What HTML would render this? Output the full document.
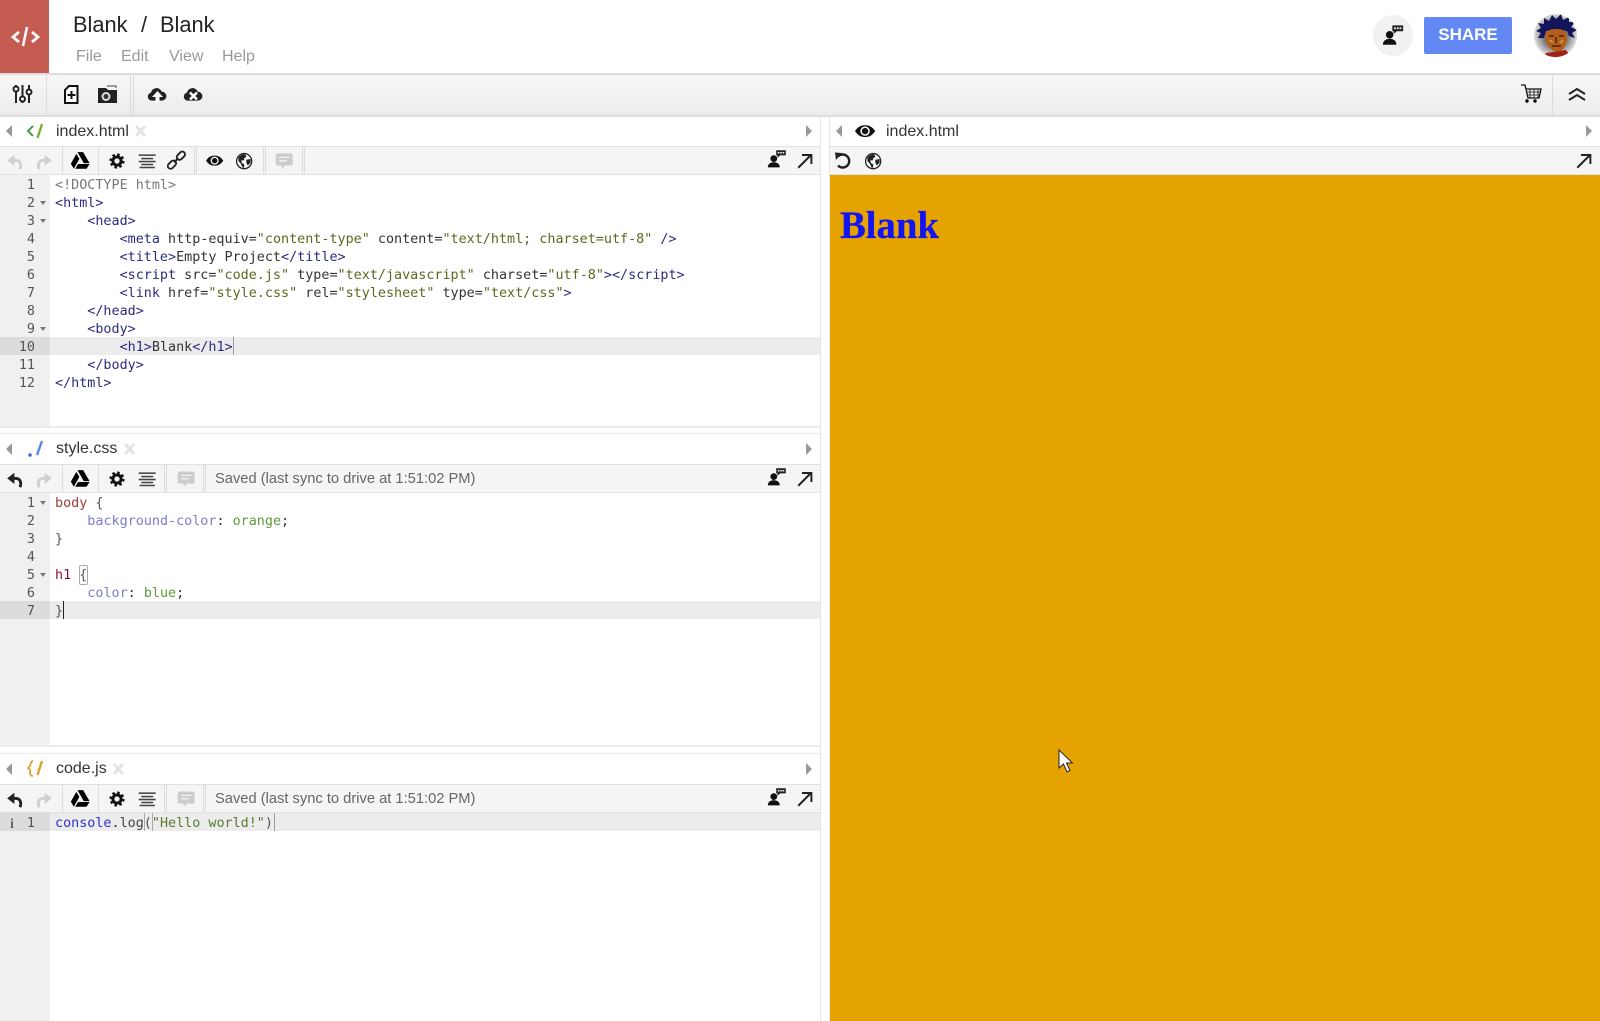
<!DOCTYPE html>
<html><head><meta charset="utf-8"><title>Blank / Blank</title>
<style>
html,body{margin:0;padding:0;width:1600px;height:1021px;overflow:hidden;background:#fff;font-family:"Liberation Sans",sans-serif}
div,span.a{position:absolute}
.bar{left:0;background:#f5f5f5;border-top:1px solid #e0e0e0;border-bottom:1px solid #e2e2e2;box-sizing:border-box}
.sep{width:1px;background:#dcdcdc}
.tab{font-size:16px;color:#333;line-height:20px;white-space:pre}
.gut{left:0;width:50px;background:#f0f0f0}
.hl{left:50px;width:770px;height:18px;background:#ececec}
.hg{left:0;width:50px;height:18px;background:#dcdcdc}
.ln{font:13.42px/18px "DejaVu Sans Mono",monospace;color:#555;width:35px;left:0;text-align:right;height:18px;margin-top:2px}
.c{font:13.42px/18px "DejaVu Sans Mono",monospace;color:#333;left:55px;white-space:pre;height:18px;margin-top:2px}
.t{color:#2c2c80}.d{color:#777}.s{color:#5a6a20}.at{color:#333}
.sel{color:#a03c3c}.h{color:#900c3f}.p{color:#7c7cd0}.v{color:#609a3c}.b{color:#555}
.saved{font-size:14.7px;color:#666;line-height:20px;white-space:pre}
.menu{font-size:16px;color:#999;line-height:20px;top:46px}
svg{position:absolute;left:0;top:0}
</style></head><body>

<div style="left:0;top:0;width:49px;height:73px;background:#c45c52"></div>
<div style="left:73px;top:11px;font-size:21.8px;line-height:28px;color:#222;white-space:pre">Blank</div>
<div style="left:141px;top:11px;font-size:21.8px;line-height:28px;color:#222">/</div>
<div style="left:160px;top:11px;font-size:21.8px;line-height:28px;color:#222">Blank</div>
<div class="menu" style="left:76px;top:47px">File</div>
<div class="menu" style="left:121px;top:47px">Edit</div>
<div class="menu" style="left:169px;top:47px">View</div>
<div class="menu" style="left:222px;top:47px">Help</div>
<div style="left:1373px;top:15px;width:40px;height:41px;border-radius:50%;background:#f1f1f1"></div>
<div style="left:1424px;top:17px;width:88px;height:37px;border-radius:2px;background:#6388f3;color:#fff;font-weight:bold;font-size:17px;line-height:36px;text-align:center">SHARE</div>

<div class="bar" style="top:73px;width:1600px;height:44px;border-top:2px solid #dcdcdc;border-bottom:2px solid #dcdcdc;background:linear-gradient(#f7f7f7,#ececec)"></div>
<div class="sep" style="left:46px;top:75px;height:41px"></div>
<div class="sep" style="left:130px;top:75px;height:41px"></div>
<div class="sep" style="left:133px;top:75px;height:41px"></div>
<div class="sep" style="left:1552px;top:75px;height:41px"></div>

<!-- panel 1 -->
<div class="bar" style="top:146px;width:820px;height:29px"></div>
<div class="sep" style="left:62px;top:147px;height:27px"></div>
<div class="sep" style="left:98px;top:147px;height:27px"></div>
<div class="sep" style="left:194px;top:147px;height:27px"></div>
<div class="sep" style="left:196px;top:147px;height:27px"></div>
<div class="sep" style="left:263px;top:147px;height:27px"></div>
<div class="sep" style="left:265px;top:147px;height:27px"></div>
<div class="sep" style="left:302px;top:147px;height:27px"></div>
<div class="sep" style="left:304px;top:147px;height:27px"></div>
<div class="tab" style="left:56px;top:122px">index.html</div>
<div class="gut" style="top:175px;height:251px"></div>
<div class="hl" style="top:337px"></div><div class="hg" style="top:337px"></div>
<div style="left:0;top:426px;width:820px;height:2px;background:#ececec"></div>
<div style="left:0;top:433px;width:820px;height:1px;background:#e8e8e8"></div>

<div class="ln" style="top:175px">1</div><div class="c d" style="top:175px">&lt;!DOCTYPE html&gt;</div>
<div class="ln" style="top:193px">2</div><div class="c t" style="top:193px">&lt;html&gt;</div>
<div class="ln" style="top:211px">3</div><div class="c t" style="top:211px">    &lt;head&gt;</div>
<div class="ln" style="top:229px">4</div><div class="c" style="top:229px">        <span class="t">&lt;meta</span> http-equiv=<span class="s">"content-type"</span> content=<span class="s">"text/html; charset=utf-8"</span> <span class="t">/&gt;</span></div>
<div class="ln" style="top:247px">5</div><div class="c" style="top:247px">        <span class="t">&lt;title&gt;</span>Empty Project<span class="t">&lt;/title&gt;</span></div>
<div class="ln" style="top:265px">6</div><div class="c" style="top:265px">        <span class="t">&lt;script</span> src=<span class="s">"code.js"</span> type=<span class="s">"text/javascript"</span> charset=<span class="s">"utf-8"</span><span class="t">&gt;&lt;/script&gt;</span></div>
<div class="ln" style="top:283px">7</div><div class="c" style="top:283px">        <span class="t">&lt;link</span> href=<span class="s">"style.css"</span> rel=<span class="s">"stylesheet"</span> type=<span class="s">"text/css"</span><span class="t">&gt;</span></div>
<div class="ln" style="top:301px">8</div><div class="c t" style="top:301px">    &lt;/head&gt;</div>
<div class="ln" style="top:319px">9</div><div class="c t" style="top:319px">    &lt;body&gt;</div>
<div class="ln" style="top:337px">10</div><div class="c" style="top:337px">        <span class="t">&lt;h1&gt;</span>Blank<span class="t">&lt;/h1&gt;</span></div>
<div class="ln" style="top:355px">11</div><div class="c t" style="top:355px">    &lt;/body&gt;</div>
<div class="ln" style="top:373px">12</div><div class="c t" style="top:373px">&lt;/html&gt;</div>
<div style="left:233px;top:337px;width:1px;height:18px;background:#999"></div>

<!-- panel 2 -->
<div class="bar" style="top:464px;width:820px;height:29px"></div>
<div class="sep" style="left:62px;top:465px;height:27px"></div>
<div class="sep" style="left:98px;top:465px;height:27px"></div>
<div class="sep" style="left:164px;top:465px;height:27px"></div>
<div class="sep" style="left:166px;top:465px;height:27px"></div>
<div class="sep" style="left:203px;top:465px;height:27px"></div>
<div class="sep" style="left:205px;top:465px;height:27px"></div>
<div class="tab" style="left:56px;top:439px">style.css</div>
<div class="saved" style="left:215px;top:469px">Saved (last sync to drive at 1:51:02 PM)</div>
<div class="gut" style="top:493px;height:252px"></div>
<div class="hl" style="top:601px"></div><div class="hg" style="top:601px"></div>
<div style="left:0;top:745px;width:820px;height:2px;background:#ececec"></div>
<div style="left:0;top:753px;width:820px;height:1px;background:#e8e8e8"></div>

<div class="ln" style="top:493px">1</div><div class="c" style="top:493px"><span class="sel">body</span> <span class="b">{</span></div>
<div class="ln" style="top:511px">2</div><div class="c" style="top:511px">    <span class="p">background-color</span>: <span class="v">orange</span>;</div>
<div class="ln" style="top:529px">3</div><div class="c b" style="top:529px">}</div>
<div class="ln" style="top:547px">4</div>
<div class="ln" style="top:565px">5</div><div class="c" style="top:565px"><span class="h">h1</span> <span class="b">{</span></div>
<div style="left:79px;top:565px;width:7px;height:18px;border:1px solid #aaa;border-radius:2px"></div>
<div class="ln" style="top:583px">6</div><div class="c" style="top:583px">    <span class="p">color</span>: <span class="v">blue</span>;</div>
<div class="ln" style="top:601px">7</div><div class="c b" style="top:601px">}</div>
<div style="left:63px;top:601px;width:1px;height:18px;background:#222"></div>

<!-- panel 3 -->
<div class="bar" style="top:784px;width:820px;height:29px"></div>
<div class="sep" style="left:62px;top:785px;height:27px"></div>
<div class="sep" style="left:98px;top:785px;height:27px"></div>
<div class="sep" style="left:164px;top:785px;height:27px"></div>
<div class="sep" style="left:166px;top:785px;height:27px"></div>
<div class="sep" style="left:203px;top:785px;height:27px"></div>
<div class="sep" style="left:205px;top:785px;height:27px"></div>
<div class="tab" style="left:56px;top:759px">code.js</div>
<div class="saved" style="left:215px;top:789px">Saved (last sync to drive at 1:51:02 PM)</div>
<div class="gut" style="top:813px;height:208px"></div>
<div class="hl" style="top:813px"></div><div class="hg" style="top:813px"></div>
<div class="ln" style="top:813px">1</div>
<div class="c" style="top:813px"><span style="color:#2f2fd0">console</span>.<span style="color:#444">log</span><span class="b">(</span><span style="color:#5a7a30">"Hello world!"</span><span class="b">)</span></div>
<div style="left:144px;top:813px;width:7px;height:18px;border-left:1px solid #aaa;border-right:1px solid #aaa"></div>
<div style="left:274px;top:813px;width:1px;height:18px;background:#999"></div>

<!-- dividers -->
<div style="left:820px;top:117px;width:1px;height:904px;background:#e6e6e6"></div>
<div style="left:829px;top:117px;width:1px;height:904px;background:#e6e6e6"></div>

<!-- right panel -->
<div class="bar" style="left:830px;top:146px;width:770px;height:29px"></div>
<div class="tab" style="left:886px;top:122px">index.html</div>
<div style="left:830px;top:175px;width:770px;height:846px;background:#e5a302;overflow:hidden">
  <div style="left:10px;top:29px;font:bold 38.7px/44px 'Liberation Serif',serif;color:#1414f0;-webkit-text-stroke:.3px #1414f0">Blank</div>
</div>

<svg width="1600" height="1021" viewBox="0 0 1600 1021" xmlns="http://www.w3.org/2000/svg">
<defs>
<g id="undo"><path d="M10.500 3.500 1.500 10.500 10.500 17.500Z" fill="currentColor"/><path d="M9 10.500H12.500C17 10.500 20 15 17.500 21.500" fill="none" stroke="currentColor" stroke-width="3.600"/></g>
<g id="drive"><path d="M8.800 2.500H15.500L23 15.500H16.200Z"/><path d="M7.500 4.500 11 10.500 4.500 22 1 16Z"/><path d="M9.500 16.500H23L19.500 22H6.200Z"/></g>
<g id="gear"><circle cx="12" cy="12" r="5.500" fill="none" stroke="#111" stroke-width="4"/><circle cx="12" cy="12" r="8.600" fill="none" stroke="#111" stroke-width="3" stroke-dasharray="3.400 3.350"/></g>
<g id="align" fill="#444"><rect x="2" y="4" width="20" height="1.800"/><rect x="5" y="8" width="14" height="1.800"/><rect x="2" y="11.500" width="20" height="1.800"/><rect x="5" y="15" width="14" height="1.800"/><rect x="3" y="18.500" width="18" height="1.800"/></g>
<g id="link" fill="none" stroke="#222" stroke-width="2.200"><rect x="12" y="3.500" width="11" height="6.500" rx="3.200" transform="rotate(-45 17.500 6.750)"/><rect x="1.500" y="14" width="11" height="6.500" rx="3.200" transform="rotate(-45 7 17.250)"/><path d="M9.500 14.500 14.500 9.500"/></g>
<g id="eye"><path d="M0 12C4 6 8 5 12 5S20 6 24 12C20 18 16 19 12 19S4 18 0 12Z" fill="#111"/><circle cx="12" cy="12" r="5.600" fill="#fff"/><circle cx="12" cy="12" r="3.800" fill="#111"/></g>
<g id="globe"><circle cx="12" cy="12" r="10.500" fill="#fff" stroke="#222" stroke-width="1.800"/><path d="M4 7C7 3 12 2 14 3L15 6 12 8 12 11 8 11 9 15 12 16 12 21 10 21 7 15 4 12ZM15 10 21 9 21 14 17 18 15 14Z" fill="#222"/></g>
<g id="comment"><path d="M4 3H20A2 2 0 0 1 22 5V15A2 2 0 0 1 20 17H13L9 21V17H4A2 2 0 0 1 2 15V5A2 2 0 0 1 4 3Z" fill="#ccc"/><path d="M6 7.500H18M6 11.500H15" stroke="#f5f5f5" stroke-width="1.500"/></g>
<g id="person"><circle cx="8.500" cy="12" r="4.200" fill="#111"/><path d="M1 23C1 18 5 16.500 8.500 16.500S16 18 16 23Z" fill="#111"/><path d="M11.500 1.500H23.500V8H16.500L13 11V8H11.500Z" fill="#222"/><path d="M13.500 4.700H21.500" stroke="#f5f5f5" stroke-width="2" stroke-dasharray="2 1"/></g>
<g id="arrow"><path d="M3 21 20 4M8 4H20.500V16" fill="none" stroke="#222" stroke-width="2.600"/></g>
<g id="cloud"><path d="M6 20A5 5 0 0 1 5 10.100 7 7 0 0 1 18.500 9 5.500 5.500 0 0 1 19 20Z" fill="#222"/></g>
</defs>

<!-- logo -->
<g fill="none" stroke="#fff" stroke-width="2.800" opacity=".95"><path d="M19 32 13 37 19 42M32 32 38 37 32 42"/><path d="M27 27 23 46" stroke-width="2.600"/></g>

<!-- header person -->
<use href="#person" transform="translate(1382 24) scale(.9)"/>

<!-- avatar -->
<defs><radialGradient id="sil"><stop offset=".55" stop-color="#777"/><stop offset="1" stop-color="#e2e2e2"/></radialGradient><clipPath id="av"><circle cx="1555.500" cy="35.500" r="21.700"/></clipPath></defs>
<g clip-path="url(#av)"><circle cx="1555.500" cy="35.500" r="21.700" fill="url(#sil)"/>
<path d="M1538 38 1541 33 1536 31 1541 28 1538 23 1544 24 1544 18 1549 21 1552 15 1556 19 1561 14 1563 20 1569 17 1569 22 1575 22 1571 27 1577 30 1572 33 1575 38 1569 36 1567 31 1556 29 1546 31 1544 38Z" fill="#14145a"/>
<path d="M1545 36C1545 31 1550 29 1556 29 1563 29 1567 31 1567 38 1567 46 1563 51 1557 52 1551 51 1546 45 1545 36Z" fill="#b0601a"/>
<path d="M1546 53 1566 50 1573 60H1540Z" fill="#a0241c"/>
<path d="M1549 36H1554M1559 36H1564M1552 46H1561M1556 37V43" stroke="#5a1c08" stroke-width="1.500" fill="none"/>
<path d="M1549 40 1553 42M1563 40 1560 43" stroke="#d8a030" stroke-width="1.500"/></g>

<!-- main toolbar -->
<g fill="none" stroke="#222" stroke-width="2"><path d="M16 85V103M22.500 85V103M29 85V103"/></g>
<g fill="#fff" stroke="#222" stroke-width="2"><circle cx="16" cy="89" r="2.500"/><circle cx="22.500" cy="99" r="2.500"/><circle cx="29" cy="92" r="2.500"/></g>
<path d="M69 86H77.500V103H65V90Z" fill="#fff" stroke="#111" stroke-width="2"/><path d="M71.500 91V99M67.500 95H75.500" stroke="#111" stroke-width="2"/>
<path d="M98 88H106L108 90H117V103H98Z" fill="#222"/><path d="M107 86H116V88" fill="none" stroke="#444"/><circle cx="106" cy="96.500" r="4.500" fill="#ddd"/><circle cx="106" cy="96.500" r="2.500" fill="#333"/>
<use href="#cloud" transform="translate(147 84.600) scale(.8)"/><path d="M157.500 91 152 97H155.500V102H159.500V97H163Z" fill="#fff"/>
<use href="#cloud" transform="translate(183 84.600) scale(.8)"/><path d="M190 92.500 197 99.500M197 92.500 190 99.500" stroke="#fff" stroke-width="2.600"/>
<path d="M1521 85H1525L1528 98H1539L1541 89H1526" fill="none" stroke="#111" stroke-width="1.300"/><path d="M1530 89V98M1534 89V98M1538 89V98M1526.500 92H1540M1527.500 95H1540" stroke="#111" stroke-width=".8"/><circle cx="1527" cy="101" r="1.700"/><circle cx="1535" cy="101" r="1.700"/>
<path d="M1569 94 1577 89 1585 94M1569 100 1577 95 1585 100" fill="none" stroke="#222" stroke-width="2"/>

<!-- tab rows: triangles, type icons, closers -->
<g fill="#999"><path d="M6 131 12 125V137Z"/><path d="M6 449 12 443V455Z"/><path d="M6 769 12 763V775Z"/><path d="M836 131 842 125V137Z"/>
<path d="M806 125 812 131 806 137Z"/><path d="M806 443 812 449 806 455Z"/><path d="M806 763 812 769 806 775Z"/><path d="M1586 125 1592 131 1586 137Z"/></g>
<path d="M33 126 28 131 33 136" fill="none" stroke="#4a9a4a" stroke-width="2"/><path d="M42 124 37.500 138" stroke="#7fae3c" stroke-width="2.400"/>
<circle cx="30" cy="455" r="1.800" fill="#3a66e0"/><path d="M42 441 37 455" stroke="#5a86f0" stroke-width="2.400"/>
<path d="M33 761C30 761 31 765 30 766 29 767 28 768 28 768 29 769 31 769 30 772 30 775 31 776 33 776" fill="none" stroke="#e0a030" stroke-width="1.800"/><path d="M42 761 37.500 775" stroke="#e0a030" stroke-width="2.400"/>
<g stroke="#e4e4e4" stroke-width="3"><path d="M136 126 145 136M145 126 136 136"/><path d="M125 444 134 454M134 444 125 454"/><path d="M114 764 123 774M123 764 114 774"/></g>

<!-- gutter folds -->
<g fill="#777"><path d="M40 201H46L43 205Z"/><path d="M40 219H46L43 223Z"/><path d="M40 327H46L43 331Z"/><path d="M40 501H46L43 505Z"/><path d="M40 573H46L43 577Z"/></g>
<text x="10" y="828" font-family="Liberation Serif,serif" font-weight="bold" font-size="14" fill="#666">i</text>

<!-- panel 1 toolbar -->
<g style="color:#d0d0d0"><use href="#undo" transform="translate(6 152) scale(.8)"/><use href="#undo" transform="translate(53 152) scale(-.8 .8)"/></g>
<use href="#drive" transform="translate(70 150) scale(.85)"/>
<use href="#gear" transform="translate(108 152) scale(.75)"/>
<use href="#align" transform="translate(137 151) scale(.85)"/>
<use href="#link" transform="translate(166 150) scale(.85)"/>
<use href="#eye" transform="translate(206 152) scale(.72)"/>
<use href="#globe" transform="translate(235.500 152.500) scale(.72)"/>
<use href="#comment" transform="translate(274 151) scale(.85)"/>
<use href="#person" transform="translate(767 149) scale(.8)"/>
<use href="#arrow" transform="translate(796 152) scale(.75)"/>

<!-- panel 2 toolbar -->
<use href="#undo" style="color:#222" transform="translate(6 470) scale(.8)"/><use href="#undo" style="color:#d0d0d0" transform="translate(53 470) scale(-.8 .8)"/>
<use href="#drive" transform="translate(70 468) scale(.85)"/>
<use href="#gear" transform="translate(108 470) scale(.75)"/>
<use href="#align" transform="translate(137 469) scale(.85)"/>
<use href="#comment" transform="translate(176 469) scale(.85)"/>
<use href="#person" transform="translate(767 467) scale(.8)"/>
<use href="#arrow" transform="translate(796 470) scale(.75)"/>

<!-- panel 3 toolbar -->
<use href="#undo" style="color:#222" transform="translate(6 790) scale(.8)"/><use href="#undo" style="color:#d0d0d0" transform="translate(53 790) scale(-.8 .8)"/>
<use href="#drive" transform="translate(70 788) scale(.85)"/>
<use href="#gear" transform="translate(108 790) scale(.75)"/>
<use href="#align" transform="translate(137 789) scale(.85)"/>
<use href="#comment" transform="translate(176 789) scale(.85)"/>
<use href="#person" transform="translate(767 787) scale(.8)"/>
<use href="#arrow" transform="translate(796 790) scale(.75)"/>

<!-- right panel icons -->
<use href="#eye" transform="translate(855 121) scale(.84)"/>
<path d="M838 156.500A6.500 6.500 0 1 1 838 165.500" fill="none" stroke="#222" stroke-width="2.400"/><path d="M835 152.500 842 153 836 160Z" fill="#222"/>
<use href="#globe" transform="translate(864.500 152.500) scale(.72)"/>
<use href="#arrow" transform="translate(1575 152) scale(.75)"/>

<!-- mouse cursor -->
<path d="M1059 750V768L1063.500 764 1067 772 1070 770.500 1066.500 763H1072.500Z" fill="#fff" stroke="#222" stroke-width="1"/>
</svg>
</body></html>
